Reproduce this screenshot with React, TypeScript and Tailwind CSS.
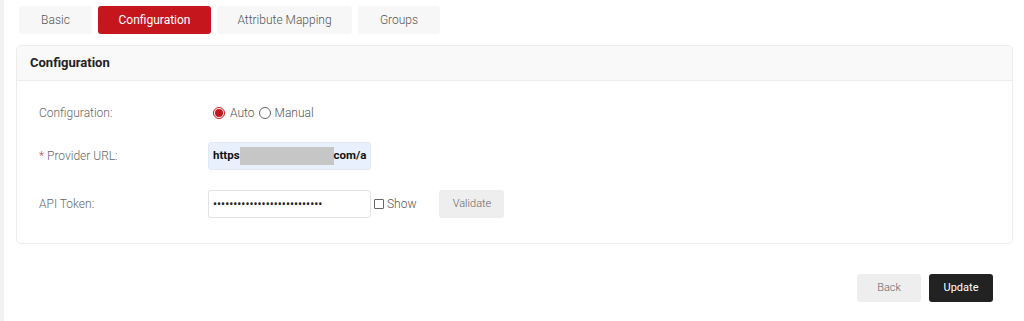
import React from 'react';

const tabs = [
    {label: 'Basic', w: 'w-[73px]'},
    {label: 'Configuration', w: 'w-[113px]', active: true},
    {label: 'Attribute Mapping', w: 'w-[135px]'},
    {label: 'Groups', w: 'w-[82px]'},
];

const App = () => {
    return (
        <div className="min-h-[321px] bg-white border-l-4 border-[#f1f1f1] text-[12px] font-light text-[#555]" style={{fontFamily: 'Roboto, "Liberation Sans", sans-serif'}}>
            <div className="pl-3 pr-[11px] pt-[6px]">
                {/* tabs */}
                <div className="flex gap-[6px] pl-[3px]">
                    {tabs.map((t) => (
                        <div
                            key={t.label}
                            className={`${t.w} h-[28px] flex items-center justify-center rounded-[3px] ${t.active ? 'bg-[#c4161c] text-white font-normal' : 'bg-[#f7f7f7] text-[#555]'}`}
                        >
                            {t.label}
                        </div>
                    ))}
                </div>

                {/* card */}
                <div className="mt-[11px] border border-[#ececec] rounded-[5px]">
                    <div className="h-[35px] flex items-center px-[13px] bg-[#f9f9f9] border-b border-[#ededed] rounded-t-[5px] text-[13px] font-bold text-[#222]">
                        Configuration
                    </div>
                    <div className="pl-[22px] pt-[18px] pb-[25px]">
                        <div className="flex items-center h-[28px]">
                            <div className="w-[169px] text-[#666]">Configuration:</div>
                            <div className="flex items-center pl-[5px]">
                                <span className="w-[12px] h-[12px] rounded-full border border-[#c4161c] flex items-center justify-center">
                                    <span className="w-[8px] h-[8px] rounded-full bg-[#c4161c]"></span>
                                </span>
                                <span className="ml-[5px]">Auto</span>
                                <span className="ml-[4px] w-[12px] h-[12px] rounded-full border border-[#666] bg-white"></span>
                                <span className="ml-[4px]">Manual</span>
                            </div>
                        </div>

                        <div className="flex items-center h-[28px] mt-[15px]">
                            <div className="w-[169px] text-[#666]"><span className="text-[#b55]">*</span> Provider URL:</div>
                            <div className="w-[163px] h-[28px] rounded-[3px] bg-[#e8f0fe] border border-[#e2e8f2] flex items-center pl-[4px] text-[11.5px] font-bold text-[#111]">
                                <span>https</span>
                                <span className="w-[94px] h-[18px] bg-[#c6c6c6]"></span>
                                <span>com/a</span>
                            </div>
                        </div>

                        <div className="flex items-center h-[28px] mt-5">
                            <div className="w-[169px] text-[#666]">API Token:</div>
                            <input
                                type="password"
                                readOnly
                                value="abcdefghijklmnopqrstuvwxyza"
                                className="w-[163px] h-[28px] rounded-[3px] border border-[#e2e2e2] bg-white px-[4px] text-[12px] font-normal text-[#222] outline-none"
                            />
                            <span className="ml-[3px] w-[10px] h-[10px] border border-[#666] rounded-[1px] bg-white"></span>
                            <span className="ml-[3px]">Show</span>
                            <div className="ml-[23px] w-[65px] h-[28px] rounded-[3px] bg-[#eeeeee] text-[11px] text-[#666] flex items-center justify-center">Validate</div>
                        </div>
                    </div>
                </div>

                {/* actions */}
                <div className="flex justify-end gap-2 mt-[30px] pr-5">
                    <div className="w-[64px] h-[28px] rounded-[3px] bg-[#eeeeee] text-[11px] text-[#666] flex items-center justify-center">Back</div>
                    <div className="w-[64px] h-[28px] rounded-[3px] bg-[#222222] text-[11px] font-normal text-white flex items-center justify-center">Update</div>
                </div>
            </div>
        </div>
    );
};

export default App;
